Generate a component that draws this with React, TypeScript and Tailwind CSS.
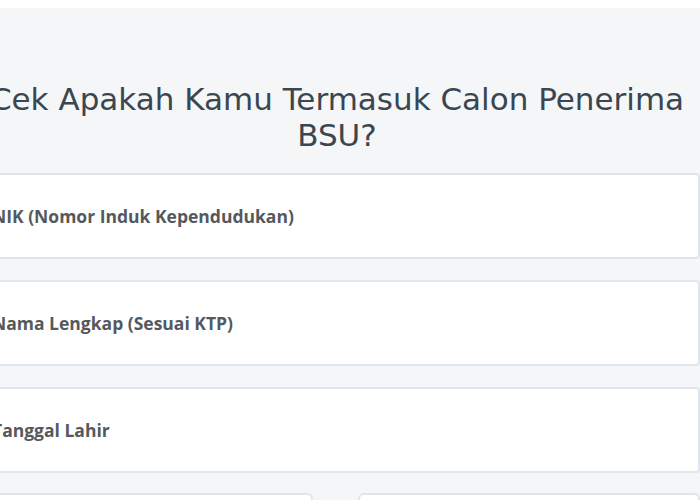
import React from "react";

const fields = ["NIK (Nomor Induk Kependudukan)", "Nama Lengkap (Sesuai KTP)", "Tanggal Lahir"];

export default function App() {
  return (
    <div className="w-[700px] h-[500px] overflow-hidden bg-white">
      <div className="mt-2 h-full bg-[#f5f6f8] -ml-[26px] w-[726px] pt-[73px]">
        <h1 className="text-center text-[31px] leading-[36px] text-[#3a4650] [font-family:'DejaVu_Sans',sans-serif]">
          Cek Apakah Kamu Termasuk Calon Penerima BSU?
        </h1>

        <div className="mt-[20px] flex flex-col gap-[21px]">
          {fields.map((f) => (
            <div
              key={f}
              className="h-[86px] rounded-[4px] border-2 border-[#e0e6ed] bg-white flex items-center pl-[16px]"
            >
              <span className="text-[17.5px] font-bold text-[#55595d] [font-family:'Open_Sans',sans-serif]">{f}</span>
            </div>
          ))}
        </div>

        <div className="mt-[20px] flex gap-[45px]">
          <div className="w-[339px] h-[40px] rounded-[6px] border-2 border-[#e0e6ed] bg-white" />
          <div className="flex-1 h-[40px] rounded-[6px] border-2 border-[#e0e6ed] bg-white" />
        </div>
      </div>
    </div>
  );
}
